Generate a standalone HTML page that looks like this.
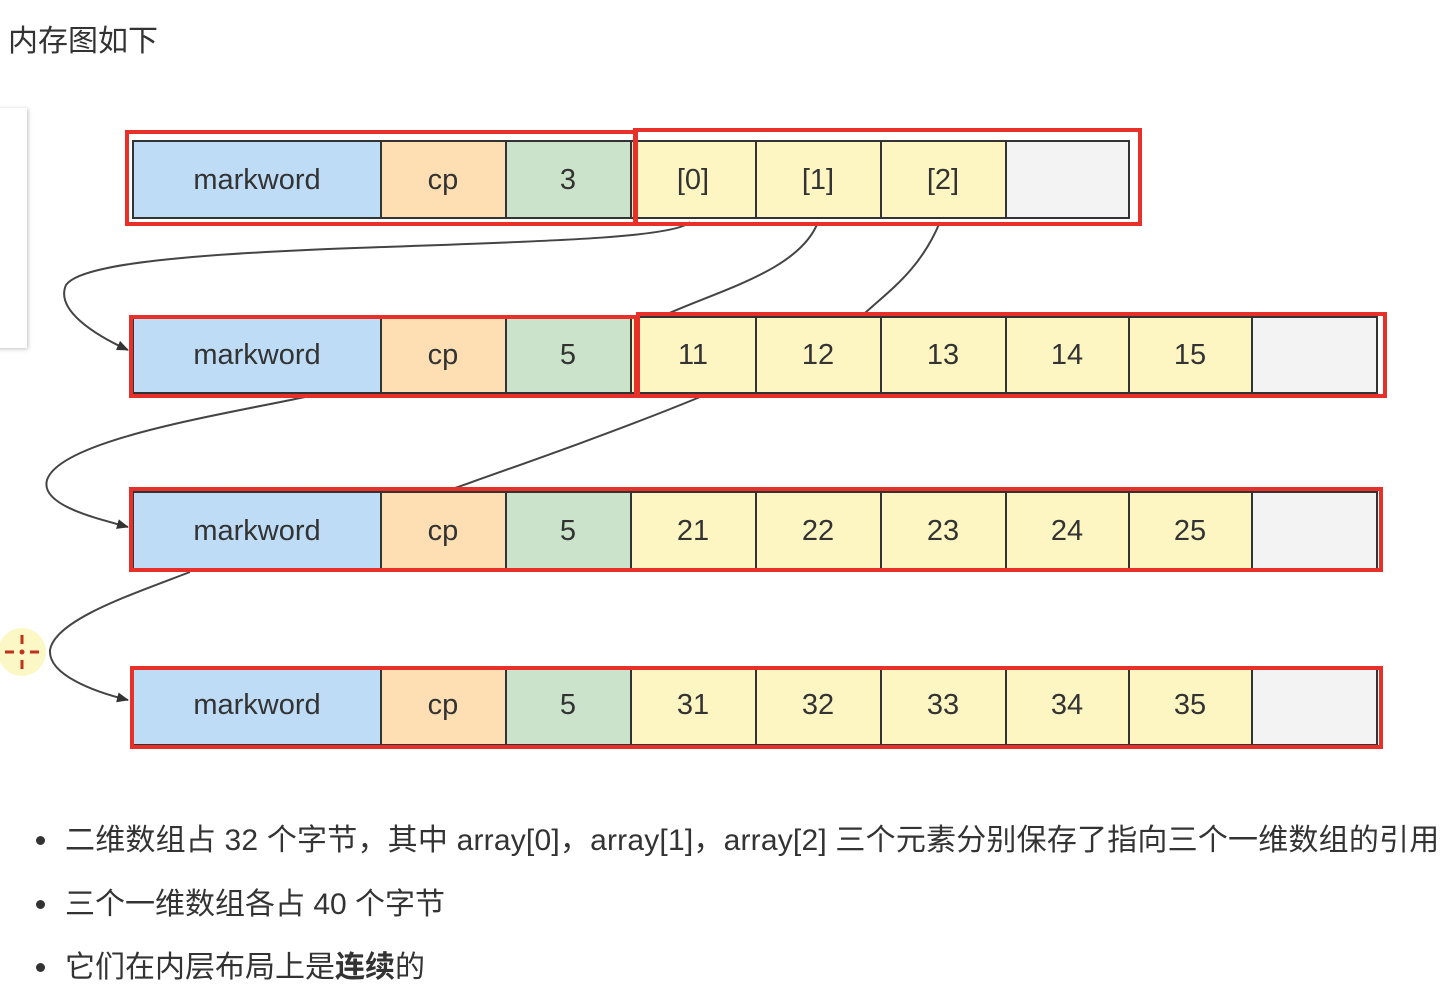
<!DOCTYPE html>
<html><head><meta charset="utf-8"><style>
body{margin:0;width:1454px;height:1005px;background:#fff;overflow:hidden;position:relative;font-family:"Liberation Sans","Noto Sans CJK SC",sans-serif;color:#333}
.t{position:absolute;font-size:30px;white-space:nowrap;line-height:36px}
.dot{position:absolute;width:9px;height:9px;border-radius:50%;background:#333}
</style></head><body>
<div class="t" style="left:8px;top:24px">内存图如下</div>
<div style="position:absolute;left:-5px;top:108px;width:32px;height:240px;background:#fff;box-shadow:1px 1px 4px rgba(0,0,0,.25)"></div>
<svg width="1454" height="800" style="position:absolute;left:0;top:0" font-family="Liberation Sans, DejaVu Sans, sans-serif">
<defs><marker id="a" markerWidth="12" markerHeight="10" refX="11" refY="5" orient="auto" markerUnits="userSpaceOnUse"><path d="M0,0 L12,5 L0,10 Z" fill="#333"/></marker></defs>
<g fill="none" stroke="#444" stroke-width="2">
<path d="M690,222 C660,255 100,235 66,285 C55,310 95,335 128,350" marker-end="url(#a)"/>
<path d="M818,222 C800,270 720,290 665,315"/>
<path d="M940,222 C920,270 890,290 865,313"/>
<path d="M305,397 C220,415 60,440 47,480 C40,505 95,518 128,527" marker-end="url(#a)"/>
<path d="M700,397 C620,430 520,465 455,488"/>
<path d="M190,572 C130,595 55,620 50,650 C48,675 95,692 128,700" marker-end="url(#a)"/>
</g>
<g stroke="#333" stroke-width="2" font-size="29" text-anchor="middle" fill="#333">
<g transform="translate(0,141)">
<rect x="133" y="0" width="248" height="77" fill="#bedcf6"/><rect x="381" y="0" width="125" height="77" fill="#fddfb3"/><rect x="506" y="0" width="125" height="77" fill="#cbe3cb"/>
<rect x="631" y="0" width="125" height="77" fill="#fdf6c3"/><rect x="756" y="0" width="125" height="77" fill="#fdf6c3"/><rect x="881" y="0" width="125" height="77" fill="#fdf6c3"/><rect x="1006" y="0" width="123" height="77" fill="#f3f3f3"/>
<g stroke="none"><text x="257" y="48">markword</text><text x="443" y="48">cp</text><text x="568" y="48">3</text><text x="693" y="48">[0]</text><text x="818" y="48">[1]</text><text x="943" y="48">[2]</text></g>
</g>
<g transform="translate(0,317)">
<rect x="133" y="0" width="248" height="76" fill="#bedcf6"/><rect x="381" y="0" width="125" height="76" fill="#fddfb3"/><rect x="506" y="0" width="125" height="76" fill="#cbe3cb"/>
<rect x="631" y="0" width="125" height="76" fill="#fdf6c3"/><rect x="756" y="0" width="125" height="76" fill="#fdf6c3"/><rect x="881" y="0" width="125" height="76" fill="#fdf6c3"/><rect x="1006" y="0" width="123" height="76" fill="#fdf6c3"/><rect x="1129" y="0" width="123" height="76" fill="#fdf6c3"/><rect x="1252" y="0" width="125" height="76" fill="#f3f3f3"/>
<g stroke="none"><text x="257" y="47">markword</text><text x="443" y="47">cp</text><text x="568" y="47">5</text><text x="693" y="47">11</text><text x="818" y="47">12</text><text x="943" y="47">13</text><text x="1067" y="47">14</text><text x="1190" y="47">15</text></g>
</g>
<g transform="translate(0,492)">
<rect x="133" y="0" width="248" height="77" fill="#bedcf6"/><rect x="381" y="0" width="125" height="77" fill="#fddfb3"/><rect x="506" y="0" width="125" height="77" fill="#cbe3cb"/>
<rect x="631" y="0" width="125" height="77" fill="#fdf6c3"/><rect x="756" y="0" width="125" height="77" fill="#fdf6c3"/><rect x="881" y="0" width="125" height="77" fill="#fdf6c3"/><rect x="1006" y="0" width="123" height="77" fill="#fdf6c3"/><rect x="1129" y="0" width="123" height="77" fill="#fdf6c3"/><rect x="1252" y="0" width="125" height="77" fill="#f3f3f3"/>
<g stroke="none"><text x="257" y="48">markword</text><text x="443" y="48">cp</text><text x="568" y="48">5</text><text x="693" y="48">21</text><text x="818" y="48">22</text><text x="943" y="48">23</text><text x="1067" y="48">24</text><text x="1190" y="48">25</text></g>
</g>
<g transform="translate(0,668)">
<rect x="133" y="0" width="248" height="77" fill="#bedcf6"/><rect x="381" y="0" width="125" height="77" fill="#fddfb3"/><rect x="506" y="0" width="125" height="77" fill="#cbe3cb"/>
<rect x="631" y="0" width="125" height="77" fill="#fdf6c3"/><rect x="756" y="0" width="125" height="77" fill="#fdf6c3"/><rect x="881" y="0" width="125" height="77" fill="#fdf6c3"/><rect x="1006" y="0" width="123" height="77" fill="#fdf6c3"/><rect x="1129" y="0" width="123" height="77" fill="#fdf6c3"/><rect x="1252" y="0" width="125" height="77" fill="#f3f3f3"/>
<g stroke="none"><text x="257" y="46">markword</text><text x="443" y="46">cp</text><text x="568" y="46">5</text><text x="693" y="46">31</text><text x="818" y="46">32</text><text x="943" y="46">33</text><text x="1067" y="46">34</text><text x="1190" y="46">35</text></g>
</g>
</g>
<g fill="none" stroke="#e8302a" stroke-width="4">
<rect x="127" y="132" width="509" height="92"/><rect x="635" y="130" width="505" height="94"/>
<rect x="131" y="317" width="505" height="79"/><rect x="638" y="314" width="747" height="82"/>
<rect x="131" y="489" width="1250" height="81"/>
<rect x="132" y="668" width="1249" height="79"/>
</g>
<circle cx="22" cy="652" r="24" fill="#fbf6b8" opacity=".8"/>
<g stroke="#c0311e" stroke-width="3"><path d="M22,635v9M22,660v9M5,652h9M30,652h9"/></g><circle cx="22" cy="652" r="2.5" fill="#c0311e"/>
</svg>
<div class="dot" style="left:36px;top:836px"></div>
<div class="t" style="left:65px;top:823px;letter-spacing:0.2px">二维数组占 32 个字节，其中 array[0]，array[1]，array[2] 三个元素分别保存了指向三个一维数组的引用</div>
<div class="dot" style="left:36px;top:900px"></div>
<div class="t" style="left:65px;top:887px">三个一维数组各占 40 个字节</div>
<div class="dot" style="left:36px;top:963px"></div>
<div class="t" style="left:65px;top:950px">它们在内层布局上是<b>连续</b>的</div>
</body></html>
